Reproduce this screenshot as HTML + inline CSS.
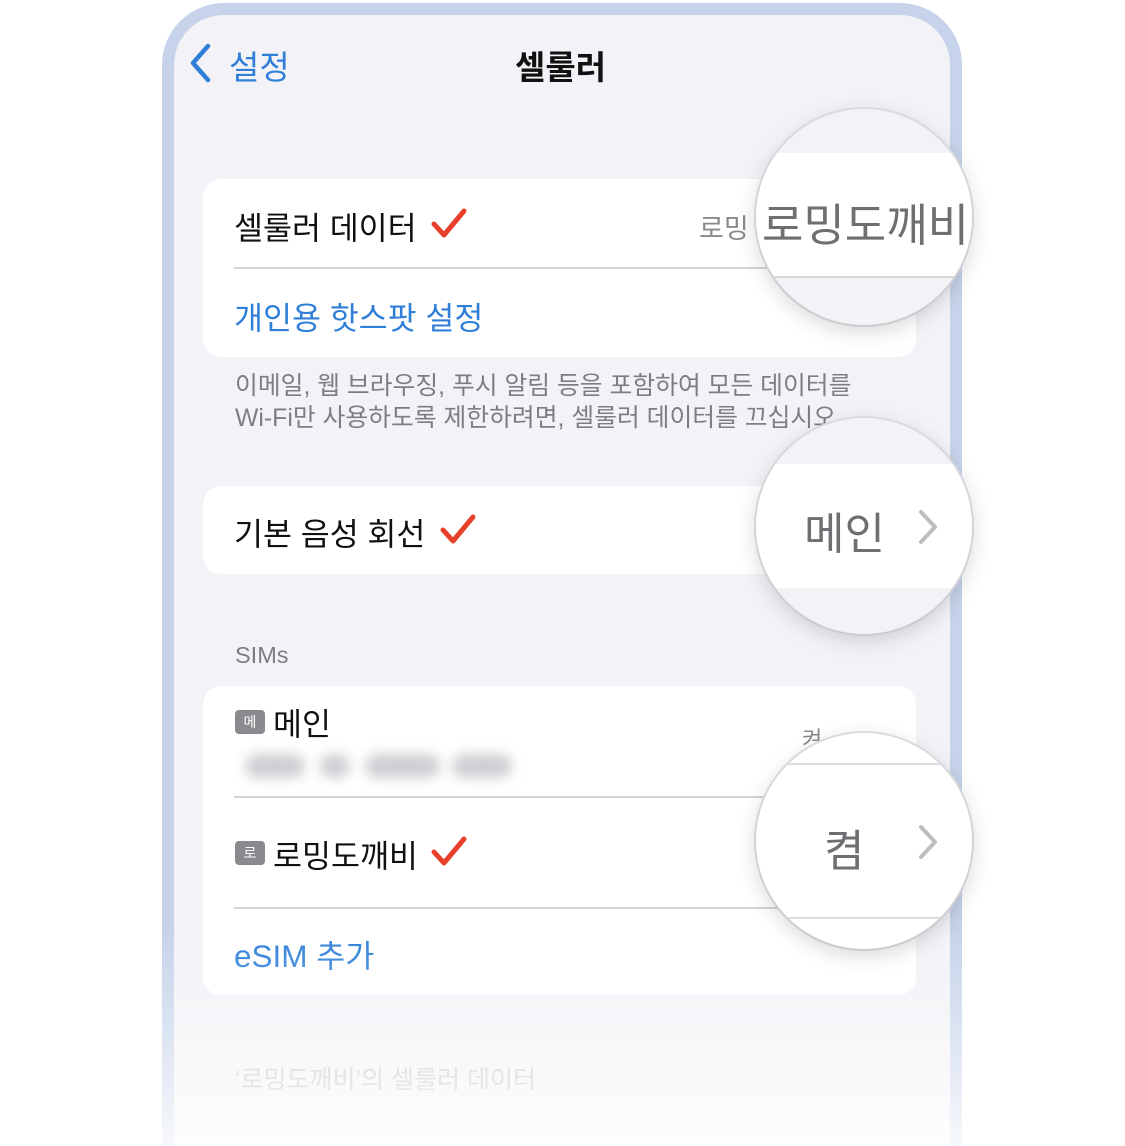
<!DOCTYPE html>
<html><head><meta charset="utf-8"><style>
*{margin:0;padding:0;box-sizing:border-box}
html,body{width:1125px;height:1146px;overflow:hidden}
body{background:#fff;position:relative;font-family:"Liberation Sans","Noto Sans CJK KR",sans-serif}
.a{position:absolute;white-space:nowrap}
.frame{position:absolute;left:162px;top:3px;width:800px;height:1143px;border-radius:62px 62px 0 0;background:#c6d3ea}
.screen{position:absolute;left:174px;top:15px;width:776px;height:1131px;border-radius:50px 50px 0 0;background:#f2f2f7}
.fade{position:absolute;left:150px;top:930px;width:830px;height:216px;background:linear-gradient(to bottom,rgba(255,255,255,0),rgba(255,255,255,0.5) 60%,rgba(255,255,255,0.85))}
.card{position:absolute;left:203px;width:713px;background:#fff;border-radius:18px}
.sep{position:absolute;height:1.5px;background:#d4d4d8;left:234px}
.t{font-size:31.5px;color:#111}
.blue{color:#2f7fd9}
.chk{position:absolute}
.circ{position:absolute;width:216px;height:216px;border-radius:50%;overflow:hidden;background:#f2f2f7;box-shadow:0 6px 22px rgba(0,0,0,0.16),0 0 0 2px #e4e4e8}
.badge{position:absolute;width:30px;height:24px;border-radius:4px;background:#8a8a8e;color:#fff;font-size:14px;text-align:center;line-height:24px}
</style></head><body>
<div class="frame"></div>
<div class="screen"></div>

<svg class="a" style="left:188px;top:43px" width="26" height="40" viewBox="0 0 26 40"><path d="M20 3 L5 20 L20 37" fill="none" stroke="#2f7fd9" stroke-width="4.5" stroke-linecap="round" stroke-linejoin="round"/></svg>
<div class="a blue" style="left:229px;top:41px;font-size:33px">설정</div>
<div class="a" style="left:515px;top:41px;font-size:33px;font-weight:bold;color:#111">셀룰러</div>

<div class="card" style="top:179px;height:178px"></div>
<div class="sep" style="top:267px;width:540px"></div>
<div class="a t" style="left:234px;top:203px">셀룰러 데이터</div>
<svg class="chk" style="left:431px;top:208px" width="36" height="32" viewBox="0 0 36 32"><path d="M3 16 L13 27 L33 3" fill="none" stroke="#e8412b" stroke-width="5" stroke-linecap="round" stroke-linejoin="round"/></svg>
<div class="a" style="left:699px;top:207px;font-size:27px;color:#8a8a8e">로밍</div>
<div class="a t blue" style="left:234px;top:293px">개인용 핫스팟 설정</div>

<div class="a" style="left:235px;top:371px;font-size:24.8px;color:#7d7d82;line-height:32px">이메일, 웹 브라우징, 푸시 알림 등을 포함하여 모든 데이터를<br>Wi-Fi만 사용하도록 제한하려면, 셀룰러 데이터를 끄십시오.</div>

<div class="card" style="top:486px;height:88px"></div>
<div class="a t" style="left:234px;top:509px">기본 음성 회선</div>
<svg class="chk" style="left:440px;top:514px" width="36" height="32" viewBox="0 0 36 32"><path d="M3 16 L13 27 L33 3" fill="none" stroke="#e8412b" stroke-width="5" stroke-linecap="round" stroke-linejoin="round"/></svg>

<div class="a" style="left:235px;top:642px;font-size:23.5px;color:#7d7d82">SIMs</div>

<div class="card" style="top:686px;height:309px"></div>
<div class="badge" style="left:235px;top:710px">메</div>
<div class="a t" style="left:273px;top:699px">메인</div>
<div class="a" style="left:245px;top:754px;width:60px;height:24px;border-radius:12px;background:#cfcfd3;filter:blur(6px)"></div>
<div class="a" style="left:320px;top:754px;width:30px;height:24px;border-radius:12px;background:#cfcfd3;filter:blur(6px)"></div>
<div class="a" style="left:365px;top:754px;width:75px;height:24px;border-radius:12px;background:#cfcfd3;filter:blur(6px)"></div>
<div class="a" style="left:452px;top:754px;width:60px;height:24px;border-radius:12px;background:#cfcfd3;filter:blur(6px)"></div>
<div class="a" style="left:802px;top:722px;font-size:22px;color:#8a8a8e">켜</div>
<div class="sep" style="top:796px;width:560px"></div>
<div class="badge" style="left:235px;top:841px">로</div>
<div class="a t" style="left:273px;top:831px">로밍도깨비</div>
<svg class="chk" style="left:431px;top:836px" width="36" height="32" viewBox="0 0 36 32"><path d="M3 16 L13 27 L33 3" fill="none" stroke="#e8412b" stroke-width="5" stroke-linecap="round" stroke-linejoin="round"/></svg>
<div class="sep" style="top:907px;width:560px"></div>
<div class="a t blue" style="left:234px;top:931px">eSIM 추가</div>

<div class="a" style="left:235px;top:1060px;font-size:25px;color:#c2c2c6">‘로밍도깨비’의 셀룰러 데이터</div>

<div class="fade"></div>

<div class="circ" style="left:756px;top:109px">
  <div class="a" style="left:0;top:44px;width:216px;height:124px;background:#fff"></div>
  <div class="a" style="left:0;top:167px;width:216px;height:2px;background:#d8d8dc"></div>
  <div class="a" style="left:6px;top:80px;font-size:45px;color:#6e6e73">로밍도깨비</div>
</div>
<div class="circ" style="left:756px;top:418px">
  <div class="a" style="left:0;top:46px;width:216px;height:124px;background:#fff"></div>
  <div class="a" style="left:48px;top:80px;font-size:44px;color:#6e6e73">메인</div>
  <svg class="a" style="left:160px;top:90px" width="24" height="38" viewBox="0 0 24 38"><path d="M5 4 L19 19 L5 34" fill="none" stroke="#bdbdc2" stroke-width="4" stroke-linecap="round" stroke-linejoin="round"/></svg>
</div>
<div class="circ" style="left:756px;top:733px;background:#fff">
  <div class="a" style="left:0;top:30px;width:216px;height:2px;background:#dcdce0"></div>
  <div class="a" style="left:0;top:184px;width:216px;height:2px;background:#dcdce0"></div>
  <div class="a" style="left:68px;top:82px;font-size:44px;color:#6e6e73">켬</div>
  <svg class="a" style="left:160px;top:90px" width="24" height="38" viewBox="0 0 24 38"><path d="M5 4 L19 19 L5 34" fill="none" stroke="#bdbdc2" stroke-width="4" stroke-linecap="round" stroke-linejoin="round"/></svg>
</div>
</body></html>
